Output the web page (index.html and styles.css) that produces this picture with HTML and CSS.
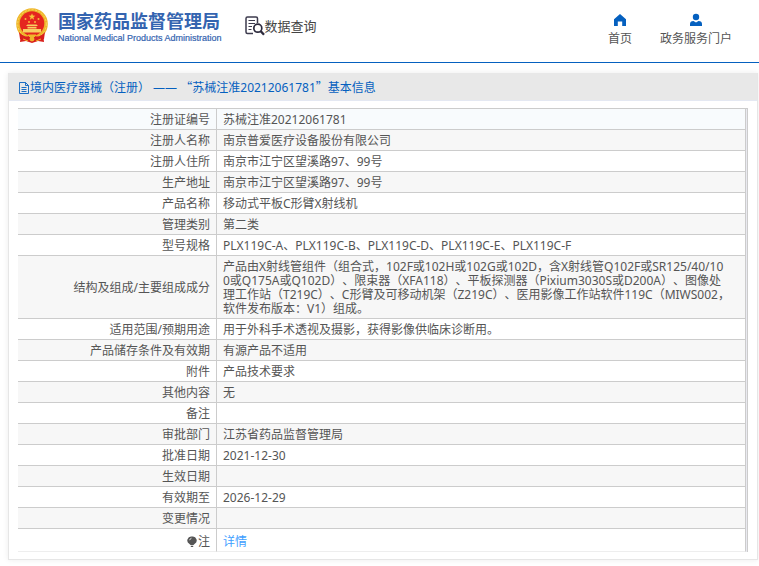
FILE: index.html
```html
<!DOCTYPE html>
<html lang="zh-CN">
<head>
    <meta charset="utf-8">
    <title>数据查询</title>
    <link rel="stylesheet" href="styles.css">
</head>
<body>
    <header class="header">
        <svg class="emblem" viewBox="0 0 34 36" aria-hidden="true">
            <path d="M6 25 L28 25 L29 34 L23 33 L17 35 L11 33 L5 34 Z" fill="#d9201c"/>
            <circle cx="17" cy="16" r="15.8" fill="#efb629"/>
            <circle cx="17" cy="16" r="14.3" fill="none" stroke="#f8d765" stroke-width="1" stroke-dasharray="2 1.5"/>
            <circle cx="17" cy="15.5" r="12.3" fill="#e5261f"/>
            <path d="M17 5.2 L17.9 7.6 L20.4 7.7 L18.4 9.3 L19.1 11.7 L17 10.3 L14.9 11.7 L15.6 9.3 L13.6 7.7 L16.1 7.6 Z" fill="#f7c83a"/>
            <g fill="#f7b83a">
                <circle cx="10.5" cy="11" r="1"/>
                <circle cx="14" cy="14" r="1"/>
                <circle cx="20" cy="14" r="1"/>
                <circle cx="23.5" cy="11" r="1"/>
            </g>
            <path d="M11 18 L12.5 16.5 H21.5 L23 18 Z M12.5 18.7 H21.5 V20.5 H12.5 Z M8 21 H26 V24.5 H8 Z" fill="#f7d062"/>
            <path d="M4 24 Q10 31 17 27 Q24 31 30 24 L29 31 Q22 33 17 31 Q12 33 5 31 Z" fill="#d9201c"/>
            <path d="M13 27 H21 L19 29 H15 Z M8 31 L13 33 M26 31 L21 33" fill="#f0b52c" stroke="#f0b52c"/>
            <circle cx="17" cy="31" r="2.4" fill="#f0b52c"/>
        </svg>
        <div class="brand">
            <div class="brand-cn">国家药品监督管理局</div>
            <div class="brand-en">National Medical Products Administration</div>
        </div>
        <div class="query">
            <svg class="query-icon" viewBox="0 0 20 20" aria-hidden="true">
                <path d="M8 17.5 H2.5 Q1 17.5 1 16 V2.5 Q1 1 2.5 1 H11 Q12.5 1 12.5 2.5 V7" fill="none" stroke="#3d3b4e" stroke-width="1.5"/>
                <path d="M3.5 4.5 H10 M3.5 7.5 H10 M3.5 10.5 H7 M3.5 13.5 H6.5" stroke="#3d3b4e"/>
                <circle cx="12.8" cy="12.2" r="4" fill="#fff" stroke="#2c2a3d" stroke-width="1.7"/>
                <path d="M15.8 15.3 L19 18.7" stroke="#2c2a3d" stroke-width="2.4"/>
            </svg>
            <span>数据查询</span>
        </div>
        <nav class="nav">
            <a href="#">
                <svg viewBox="0 0 14 14" aria-hidden="true"><path d="M7 1 L13 6.2 V13 H9.2 V8.5 H4.8 V13 H1 V6.2 Z" fill="#0560bf"/></svg>
                首页
            </a>
            <a href="#">
                <svg viewBox="0 0 14 14" aria-hidden="true"><circle cx="7" cy="4" r="3.2" fill="#0560bf"/><path d="M1 13 V11 Q1 8.3 4.5 8.1 L7 9.6 L9.5 8.1 Q13 8.3 13 11 V13 Z" fill="#0560bf"/></svg>
                政务服务门户
            </a>
        </nav>
    </header>

    <main class="panel">
        <h1 class="panel-title">
            <svg viewBox="0 0 12 12" aria-hidden="true"><path d="M1.5 0.5 H7.5 L10.5 3.5 V11.5 H1.5 Z M7.5 0.5 V3.5 H10.5 M3.5 5.5 H8.5 M3.5 7.5 H8.5 M3.5 9.5 H8.5" fill="none" stroke="#0560bf" stroke-width="0.9"/></svg>
            <span>境内医疗器械（注册） —— <span class="wide">“</span>苏械注准20212061781<span class="wide">”</span>基本信息</span>
        </h1>
        <div class="panel-body">
            <table class="info">
                <tr><th scope="row">注册证编号</th><td>苏械注准20212061781</td></tr>
                <tr><th scope="row">注册人名称</th><td>南京普爱医疗设备股份有限公司</td></tr>
                <tr><th scope="row">注册人住所</th><td>南京市江宁区望溪路97、99号</td></tr>
                <tr><th scope="row">生产地址</th><td>南京市江宁区望溪路97、99号</td></tr>
                <tr><th scope="row">产品名称</th><td>移动式平板C形臂X射线机</td></tr>
                <tr><th scope="row">管理类别</th><td>第二类</td></tr>
                <tr><th scope="row">型号规格</th><td>PLX119C-A、PLX119C-B、PLX119C-D、PLX119C-E、PLX119C-F</td></tr>
                <tr><th scope="row">结构及组成/主要组成成分</th><td>产品由X射线管组件（组合式，102F或102H或102G或102D，含X射线管Q102F或SR125/40/10<br>0或Q175A或Q102D）、限束器（XFA118）、平板探测器（Pixium3030S或D200A）、图像处<br>理工作站（T219C）、C形臂及可移动机架（Z219C）、医用影像工作站软件119C（MIWS002，<br>软件发布版本：V1）组成。</td></tr>
                <tr><th scope="row">适用范围/预期用途</th><td>用于外科手术透视及摄影，获得影像供临床诊断用。</td></tr>
                <tr><th scope="row">产品储存条件及有效期</th><td>有源产品不适用</td></tr>
                <tr><th scope="row">附件</th><td>产品技术要求</td></tr>
                <tr><th scope="row">其他内容</th><td>无</td></tr>
                <tr><th scope="row">备注</th><td></td></tr>
                <tr><th scope="row">审批部门</th><td>江苏省药品监督管理局</td></tr>
                <tr><th scope="row">批准日期</th><td>2021-12-30</td></tr>
                <tr><th scope="row">生效日期</th><td></td></tr>
                <tr><th scope="row">有效期至</th><td>2026-12-29</td></tr>
                <tr><th scope="row">变更情况</th><td></td></tr>
                <tr class="note">
                    <th scope="row"><svg viewBox="0 0 10 12" aria-hidden="true"><path d="M5 0.5 A4 4 0 0 1 7.5 8 L6.5 9 H3.5 L2.5 8 A4 4 0 0 1 5 0.5 Z M3.8 9.8 H6.2 V11 H3.8 Z" fill="#555"/><path d="M2.6 4.2 Q3 2.6 4.5 2.2" fill="none" stroke="#fff" stroke-width="0.8"/></svg>注</th>
                    <td><a href="#">详情</a></td>
                </tr>
            </table>
        </div>
    </main>
</body>
</html>
```

FILE: styles.css
```css
* {
    box-sizing: border-box;
}
body {
    margin: 0;
    background: #fff;
    color: #555;
    font: 12px/14px "Noto Sans", "Noto Sans CJK SC", sans-serif;
    text-spacing-trim: space-all;
}
a {
    color: #409eff;
    text-decoration: none;
}

.header {
    display: flex;
    align-items: flex-start;
    height: 63px;
    padding: 8px 27px 0 15px;
    border-bottom: 1px solid #0560bf;
}
.emblem {
    width: 34px;
    height: 36px;
}
.brand {
    margin-left: 9px;
    color: #3464b0;
    white-space: nowrap;
}
.brand-cn {
    font-size: 18px;
    font-weight: bold;
    line-height: 26px;
}
.brand-en {
    font-family: "Liberation Sans", Arial, sans-serif;
    font-size: 9px;
    line-height: 9px;
    -webkit-text-stroke: 0.2px #3464b0;
}
.query {
    display: flex;
    align-items: center;
    margin: 8px 0 0 23px;
    color: #444;
    font-size: 13px;
    line-height: 20px;
}
.query-icon {
    width: 20px;
    height: 20px;
}
.nav {
    display: flex;
    gap: 28px;
    margin-left: auto;
}
.nav a {
    display: flex;
    flex-direction: column;
    align-items: center;
    gap: 5px;
    margin-top: 5px;
    color: #555;
}
.nav svg {
    width: 14px;
    height: 14px;
}

.panel {
    margin: 10px 1px 6px 8px;
    border: 1px solid #e6e6e6;
    border-top: 0;
    box-shadow: 0 0 6px rgba(0, 0, 0, 0.08);
}
.panel-title {
    display: flex;
    align-items: center;
    height: 28px;
    margin: 0;
    padding: 2px 9px 0;
    background: #e8e8e8;
    border-bottom: 1px solid #e4e8f2;
    color: #0560bf;
    font-size: 12px;
    font-weight: normal;
}
.panel-title svg {
    width: 12px;
    height: 12px;
}
.wide {
    font-family: "Noto Sans CJK SC", sans-serif;
}
.panel-body {
    margin: 7px 9px;
    padding-right: 1px;
    background: #e9e9f0;
    border-top: 1px solid #ccc;
    border-right: 1px solid #ccc;
}

.info {
    width: 100%;
    border-collapse: separate;
    border-spacing: 0;
    background: #fff;
}
.info th,
.info td {
    padding: 4px 6px 2px;
    height: 21px;
    border-right: 1px solid #ccc;
    border-bottom: 1px solid #ccc;
    font-weight: normal;
    word-break: break-all;
}
.info th {
    width: 199px;
    text-align: right;
}
.info tr:nth-child(even) {
    background: #f7f7f7;
}
.info tr:first-child {
    background: #f8fbfd;
}
.info .note th,
.info .note td {
    height: 23px;
    padding-top: 6px;
    border-bottom-color: #eee;
}
.note svg {
    width: 10px;
    height: 12px;
    margin-right: 1px;
    vertical-align: -2px;
}
```
